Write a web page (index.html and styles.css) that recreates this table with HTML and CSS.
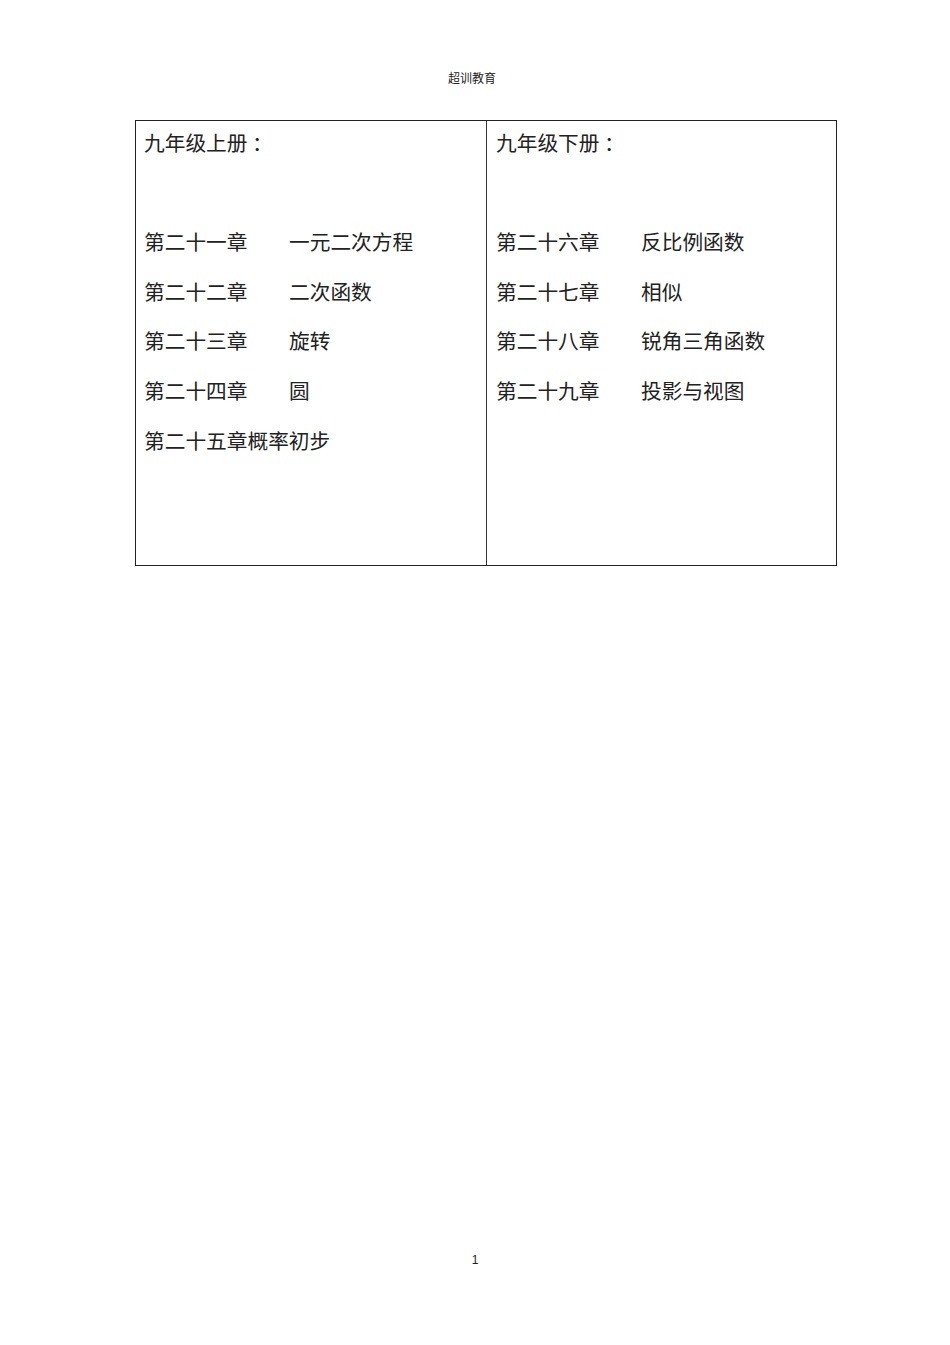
FILE: index.html
```html
<!DOCTYPE html>
<html lang="zh-CN">
<head>
<meta charset="utf-8">
<title>超训教育</title>
<link rel="stylesheet" href="styles.css">
</head>
<body>
<div class="page">
  <div class="header">超训教育</div>
  <div class="table">
    <div class="cell">
      <div class="title">九年级上册 ：</div>
      <div class="row"><span class="ch">第二十一章</span><span class="name">一元二次方程</span></div>
      <div class="row"><span class="ch">第二十二章</span><span class="name">二次函数</span></div>
      <div class="row"><span class="ch">第二十三章</span><span class="name">旋转</span></div>
      <div class="row"><span class="ch">第二十四章</span><span class="name">圆</span></div>
      <div class="row"><span>第二十五章概率初步</span></div>
    </div>
    <div class="cell cell-right">
      <div class="title">九年级下册 ：</div>
      <div class="row"><span class="ch">第二十六章</span><span class="name">反比例函数</span></div>
      <div class="row"><span class="ch">第二十七章</span><span class="name">相似</span></div>
      <div class="row"><span class="ch">第二十八章</span><span class="name">锐角三角函数</span></div>
      <div class="row"><span class="ch">第二十九章</span><span class="name">投影与视图</span></div>
    </div>
  </div>
  <div class="footer">1</div>
</div>
</body>
</html>
```
FILE: styles.css
```css
html, body {
  margin: 0;
  padding: 0;
  background: #ffffff;
}
body {
  font-family: "Noto Sans CJK SC", "Liberation Sans", sans-serif;
  color: #222;
}
.page {
  width: 950px;
  height: 1345px;
  padding-top: 68px;
  box-sizing: border-box;
}
.header {
  text-align: center;
  font-size: 12px;
  line-height: 20px;
  height: 20px;
  margin-left: -6px;
  color: #222;
}
.table {
  margin: 32px 0 0 135px;
  width: 702px;
  height: 446px;
  box-sizing: border-box;
  border: 1px solid #222;
  display: grid;
  grid-template-columns: 350px 1fr;
}
.cell {
  padding-left: 8px;
  display: flex;
  flex-direction: column;
  font-size: 20.7px;
}
.cell-right {
  border-left: 1px solid #333;
  padding-left: 9px;
}
.title {
  height: 43px;
  line-height: 43px;
  margin-bottom: 53px;
  white-space: nowrap;
}
.row {
  height: 49.7px;
  line-height: 49.7px;
  display: flex;
  white-space: nowrap;
}
.ch {
  width: 145px;
}
.footer {
  margin-top: 684px;
  text-align: center;
  font-family: "Liberation Sans", sans-serif;
  font-size: 12px;
  line-height: 20px;
  height: 20px;
  color: #222;
}
```
